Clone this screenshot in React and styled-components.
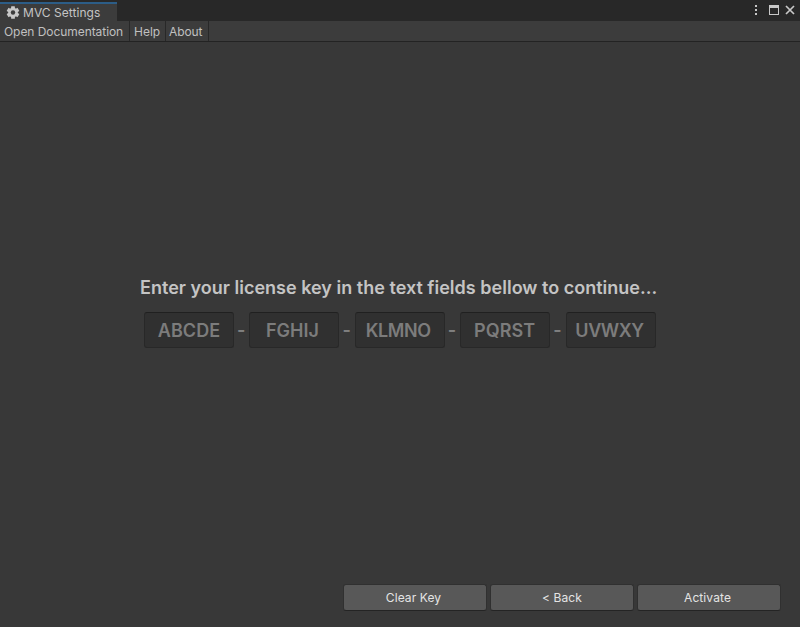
import React from 'react';
import styled, { createGlobalStyle } from 'styled-components';

const GlobalStyle = createGlobalStyle`
  * { box-sizing: border-box; }
  body { margin: 0; background: #383838; }
  button, input { font: inherit; margin: 0; }
`;

const Window = styled.div`
  width: 800px;
  height: 627px;
  display: flex;
  flex-direction: column;
  overflow: hidden;
  background: #383838;
  color: #c4c4c4;
  font: 12px/16px Inter, sans-serif;
`;

const TitleBar = styled.header`
  display: flex;
  justify-content: space-between;
  flex: 0 0 21px;
  background: #282828;
`;

const Tab = styled.div`
  display: flex;
  align-items: center;
  width: 117px;
  height: 19px;
  margin-top: 2px;
  padding-left: 6px;
  gap: 3px;
  border-top: 2px solid #2c5d87;
  background: #3c3c3c;
  letter-spacing: 0.04px;
`;

const WindowControls = styled.div`
  display: flex;
  align-items: flex-start;
  padding-top: 3px;
`;

const MenuBar = styled.nav`
  display: flex;
  flex: 0 0 21px;
  background: #3c3c3c;
  border-bottom: 1px solid #232323;
`;

const MenuItem = styled.button`
  width: ${(p) => p.$width}px;
  padding: 1px 0 0 ${(p) => p.$inset}px;
  border: 0;
  border-right: 1px solid #282828;
  background: transparent;
  color: #c0c0c0;
  text-align: left;
  white-space: nowrap;
  letter-spacing: ${(p) => p.$tracking || 0}px;
`;

const Content = styled.main`
  flex: 1;
  display: flex;
  flex-direction: column;
  padding-top: 234px;
`;

const Prompt = styled.h1`
  margin: 0 0 13px 140px;
  font-size: 18px;
  line-height: 23px;
  font-weight: 600;
  white-space: nowrap;
  letter-spacing: 0.012px;
`;

const KeyRow = styled.div`
  display: flex;
  align-items: center;
  margin-left: 144px;
  font-size: 18px;
  font-weight: 600;
  color: #808080;
`;

const KeyField = styled.input`
  width: 90px;
  height: 36px;
  padding: 1px ${(p) => p.$shift}px 0 0;
  border: 1px solid #282828;
  border-top-color: #202020;
  border-radius: 3px;
  background: #303030;
  text-align: center;
  letter-spacing: ${(p) => p.$tracking}px;
  outline: none;
  &::placeholder { color: #7c7c7c; opacity: 1; }
`;

const Dash = styled.span`
  width: 15.4px;
  padding-right: 1px;
  text-align: center;
`;

const Actions = styled.footer`
  display: flex;
  gap: 3px;
  margin: auto 19px 16px auto;
`;

const ActionButton = styled.button`
  width: 144px;
  height: 27px;
  padding: 0 ${(p) => p.$shift}px 0 0;
  border: 1px solid #303030;
  border-bottom-color: #242424;
  border-radius: 3px;
  background: #585858;
  color: #e4e4e4;
  letter-spacing: 0.1px;
`;

const groups = [
  { hint: 'ABCDE', tracking: 0.1, shift: 0 },
  { hint: 'FGHIJ', tracking: 0, shift: 4 },
  { hint: 'KLMNO', tracking: -0.4, shift: 3 },
  { hint: 'PQRST', tracking: 0.1, shift: 1 },
  { hint: 'UVWXY', tracking: -0.4, shift: 2 },
];

const GearIcon = () => (
  <svg width="14" height="14" viewBox="-7 -6.5 14 14">
    <g fill="#c8c8c8">
      {[0, 60, 120].map((a) => (
        <rect key={a} x="-1.9" y="-6.3" width="3.8" height="12.6" rx="0.5" transform={`rotate(${a})`} />
      ))}
      <circle r="4.8" />
    </g>
    <circle r="2.2" fill="#3c3c3c" />
  </svg>
);

const ControlIcons = () => (
  <svg width="48" height="15" viewBox="752 3 48 15" fill="#c8c8c8">
    <path d="M755 5h2v2h-2zM755 9h2v2h-2zM755 13h2v2h-2z" />
    <path fillRule="evenodd" d="M769 5h10v10h-10zM770 8v6h8V8z" />
    <path d="M786 6l8 8M794 6l-8 8" stroke="#c8c8c8" strokeWidth="1.7" />
  </svg>
);

export default function App() {
  return (
    <>
      <GlobalStyle />
      <Window>
        <TitleBar>
          <Tab><GearIcon />MVC Settings</Tab>
          <WindowControls><ControlIcons /></WindowControls>
        </TitleBar>
        <MenuBar>
          <MenuItem $width={130} $inset={4} $tracking={-0.06}>Open Documentation</MenuItem>
          <MenuItem $width={36} $inset={4}>Help</MenuItem>
          <MenuItem $width={43} $inset={3} $tracking={-0.1}>About</MenuItem>
        </MenuBar>
        <Content>
          <Prompt>Enter your license key in the text fields bellow to continue...</Prompt>
          <KeyRow>
            {groups.map((g, i) => (
              <React.Fragment key={g.hint}>
                {i > 0 && <Dash>-</Dash>}
                <KeyField
                  placeholder={g.hint}
                  $tracking={g.tracking}
                  $shift={g.shift}
                  aria-label={`Key group ${i + 1}`}
                />
              </React.Fragment>
            ))}
          </KeyRow>
          <Actions>
            <ActionButton $shift={3}>Clear Key</ActionButton>
            <ActionButton $shift={0}>&lt; Back</ActionButton>
            <ActionButton $shift={3}>Activate</ActionButton>
          </Actions>
        </Content>
      </Window>
    </>
  );
}
